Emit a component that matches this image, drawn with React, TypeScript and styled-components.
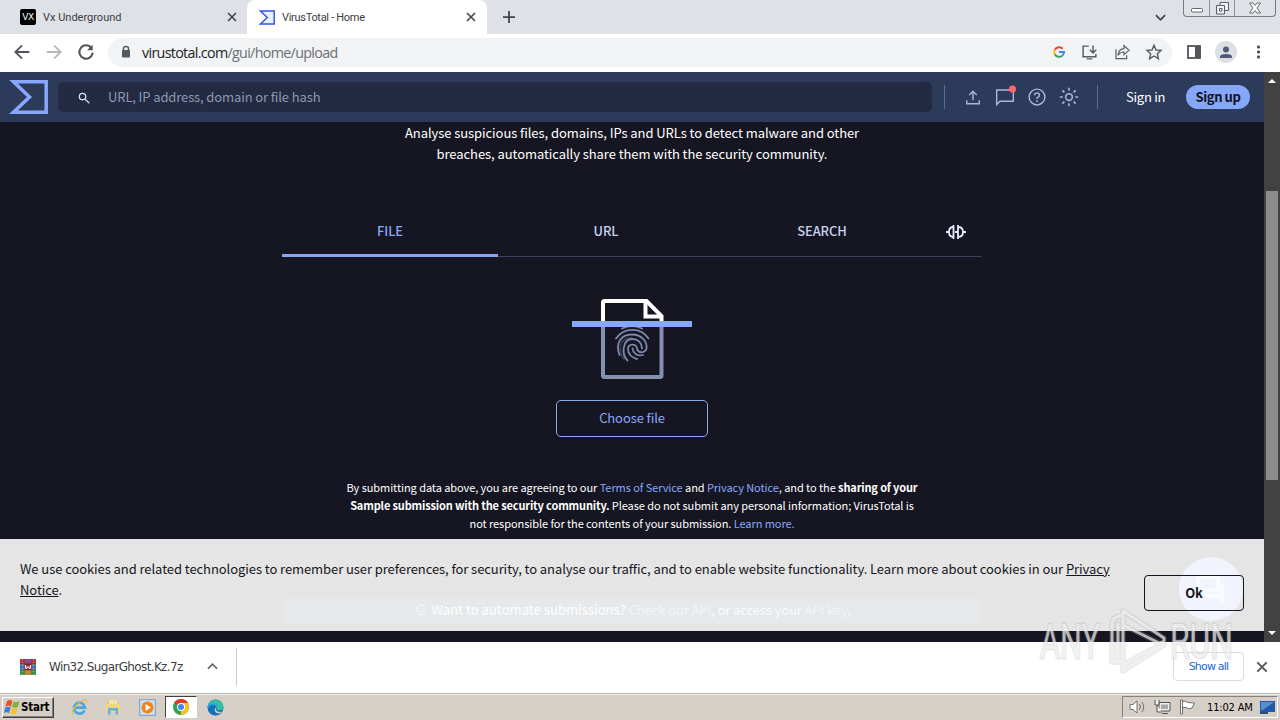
import React, { FC, ReactNode } from 'react'
import styled, { createGlobalStyle } from 'styled-components'

const GlobalStyle = createGlobalStyle`
	* {
		box-sizing: border-box;
	}

	body {
		margin: 0;
		overflow: hidden;
	}

	svg {
		display: block;
		flex: none;
		overflow: visible;
	}
`

const Screen = styled.div`
	position: relative;
	display: flex;
	flex-direction: column;
	width: 1280px;
	height: 720px;
	overflow: hidden;
	background: #fff;
	font-family: 'Noto Sans CJK SC', 'Noto Sans', sans-serif;
`

/* browser chrome */

const TabStrip = styled.div`
	display: flex;
	height: 34px;
	background: #dee1e6;
	font-family: Roboto, 'Noto Sans', sans-serif;
`

const BrowserTab = styled.div<{ $active?: boolean }>`
	display: flex;
	align-items: center;
	gap: 7px;
	width: ${({ $active }) => ($active ? 240 : 247)}px;
	padding: 0 ${({ $active }) => ($active ? 10 : 9)}px 0 ${({ $active }) => ($active ? 12 : 20)}px;
	border-radius: 8px 8px 0 0;
	background: ${({ $active }) => ($active ? '#fff' : 'transparent')};
	color: #3c4043;
	font-size: 11px;
	letter-spacing: ${({ $active }) => ($active ? -0.3 : 0)}px;

	& .title {
		flex: 1;
		white-space: nowrap;
	}
`

const VxLogo = styled.span`
	display: flex;
	align-items: center;
	justify-content: center;
	width: 16px;
	height: 16px;
	border-radius: 2px;
	background: #000;
	color: #fff;
	font: 9px 'DejaVu Sans', sans-serif;
	letter-spacing: -0.4px;
`

const NewTab = styled.div`
	display: flex;
	align-items: center;
	flex: 1;
	padding-left: 16px;
`

const TabSearch = styled.div`
	display: flex;
	align-items: center;
	padding-right: 17px;
`

const WindowButtons = styled.div`
	display: flex;
	width: 93px;
	height: 17px;
	margin-right: 4px;
	border: 1px solid #777b82;
	border-top: 0;
	border-radius: 0 0 4px 4px;
`

const WindowButton = styled.div<{ $width: number }>`
	display: flex;
	align-items: center;
	justify-content: center;
	width: ${({ $width }) => $width}px;

	& + & {
		border-left: 1px solid #8e9299;
	}
`

const Toolbar = styled.div`
	display: flex;
	align-items: center;
	height: 38px;
	padding: 0 10px 2px 14px;
`

const NavButtons = styled.div`
	display: flex;
	gap: 16px;
	padding-right: 14px;
`

const AddressBar = styled.div`
	display: flex;
	align-items: center;
	width: 1064px;
	height: 29px;
	padding: 0 10px 0 11px;
	border-radius: 15px;
	background: #f1f3f4;
	font: 14.3px 'Open Sans', sans-serif;
	letter-spacing: -0.68px;
	color: #6b6f74;

	& .url {
		flex: 1;
		margin-left: 9px;
	}

	& b {
		font-weight: 400;
		color: #202124;
	}
`

const AddressActions = styled.div`
	display: flex;
	align-items: center;
	gap: 16px;
`

const Profile = styled.div`
	display: flex;
	align-items: center;
	gap: 11px;
	padding-left: 15px;

	& .avatar {
		display: flex;
		align-items: center;
		justify-content: center;
		width: 22px;
		height: 22px;
		margin-left: 3px;
		border-radius: 50%;
		background: #dcdfe4;
	}
`

/* page */

const Viewport = styled.div`
	display: flex;
	height: 570px;
	background: #161622;
`

const Page = styled.div`
	position: relative;
	display: flex;
	flex-direction: column;
	align-items: center;
	width: 1264px;
	color: #fff;
`

const Header = styled.header`
	display: flex;
	align-items: center;
	width: 100%;
	height: 50px;
	padding: 0 14px 0 10px;
	background: #2d3b5a;
`

const SearchBox = styled.div`
	display: flex;
	align-items: center;
	gap: 17px;
	width: 874px;
	height: 30px;
	margin: 0 12px 0 10px;
	padding: 0 0 1px 19px;
	border-radius: 5px;
	background: #232a42;
	color: #8e98b2;
	font-size: 13px;
	letter-spacing: -0.12px;

	& svg {
		margin-top: 2px;
	}
`

const Divider = styled.span`
	width: 1px;
	height: 24px;
	background: #5b6a8e;
`

const HeaderIcons = styled.div`
	display: flex;
	align-items: center;
	gap: 12px;
	padding: 0 18px;
`

const SignIn = styled.span`
	width: 88px;
	padding: 0 0 1px 28px;
	font-size: 13px;
	letter-spacing: -0.25px;
	white-space: nowrap;
`

const SignUp = styled.span`
	display: flex;
	align-items: center;
	justify-content: center;
	width: 64px;
	height: 24px;
	padding-bottom: 1px;
	border-radius: 12px;
	background: #86a6fa;
	color: #11131f;
	font-size: 13px;
	font-weight: 700;
	letter-spacing: -0.4px;
`

const Intro = styled.p`
	margin: 0;
	text-align: center;
	font-size: 13px;
	line-height: 21px;
	letter-spacing: -0.07px;
	white-space: nowrap;
`

const Tabs = styled.nav`
	display: flex;
	width: 700px;
	height: 51px;
	margin-top: 42px;
	border-bottom: 1px solid #3d4258;
`

const Tab = styled.div<{ $active?: boolean }>`
	display: flex;
	align-items: center;
	justify-content: center;
	width: 216px;
	height: 51px;
	padding: ${({ $active }) => ($active ? '1px 0 0' : '0 0 2px')};
	border-bottom: ${({ $active }) => ($active ? '3px solid #87a6ef' : '0')};
	color: ${({ $active }) => ($active ? '#88a8ff' : '#c7d2f0')};
	font-size: 12.9px;
	font-weight: 500;
	letter-spacing: -0.1px;
`

const GraphTab = styled(Tab)`
	width: 52px;
	padding-bottom: 0;
`

const FileArt = styled.div`
	margin-top: 42px;
`

const ChooseFile = styled.div`
	display: flex;
	align-items: center;
	justify-content: center;
	width: 152px;
	height: 37px;
	margin-top: 21px;
	padding-bottom: 2px;
	border: 1px solid #8fa9f0;
	border-radius: 5px;
	color: #88a8ff;
	font-size: 13px;
	letter-spacing: -0.1px;
`

const Terms = styled.p`
	margin: 41px 0 0;
	text-align: center;
	font-size: 11px;
	line-height: 18px;
	letter-spacing: -0.07px;
	white-space: nowrap;

	& a {
		color: #88a8ff;
	}

	& b {
		font-weight: 700;
		letter-spacing: -0.15px;
	}
`

const CookieBar = styled.div`
	position: absolute;
	left: 0;
	bottom: 11px;
	width: 100%;
	height: 92px;
	padding: 18px 20px 0;
	border-top: 2px solid #e2e4ec;
	background: #e5e5e5;
	color: #161622;
	font-size: 13px;
	line-height: 21px;
	letter-spacing: -0.07px;

	& p {
		margin: -1px 0 0;
		white-space: nowrap;
	}
`

const AutomateNote = styled.div`
	position: absolute;
	left: 284px;
	bottom: 7px;
	display: flex;
	align-items: center;
	justify-content: center;
	gap: 4px;
	width: 696px;
	height: 26px;
	padding: 0 0 3px 2px;
	background: #e6e9eb;
	color: #fbfbfb;
	font-size: 13px;
	white-space: nowrap;
	letter-spacing: -0.1px;

	& b {
		font-weight: 500;
	}

	& a {
		color: #f1f3f8;
	}
`

const ChatBubble = styled.div`
	position: absolute;
	right: 21px;
	bottom: 10px;
	display: flex;
	align-items: center;
	justify-content: center;
	width: 64px;
	height: 64px;
	border-radius: 50%;
	background: #f1f3fd;
`

const OkButton = styled.div`
	position: absolute;
	right: 20px;
	bottom: 20px;
	display: flex;
	align-items: center;
	justify-content: center;
	width: 100px;
	height: 36px;
	padding-bottom: 2px;
	border: 1px solid #161622;
	border-radius: 4px;
	font-weight: 700;
`

const Scrollbar = styled.div`
	display: flex;
	flex-direction: column;
	align-items: center;
	justify-content: space-between;
	width: 16px;
	padding: 6px 0;
	background: #424242;

	& .thumb {
		width: 12px;
		height: 289px;
		margin-bottom: 44px;
		background: #8c8c8c;
	}
`

/* downloads shelf */

const Downloads = styled.div`
	display: flex;
	align-items: center;
	height: 51px;
	padding: 0 11px 2px 20px;
	background: #fff;
`

const DownloadItem = styled.div`
	display: flex;
	align-items: center;
	gap: 13px;
	width: 217px;
	height: 38px;
	border-right: 1px solid #c8cacd;
	color: #3c4043;
	font: 12px 'DejaVu Sans', sans-serif;
	letter-spacing: -0.64px;

	& .name {
		width: 145px;
		white-space: nowrap;
	}
`

const ShowAll = styled.div`
	display: flex;
	align-items: center;
	justify-content: center;
	width: 71px;
	height: 29px;
	margin: 0 11px 0 auto;
	border: 1px solid #dadce0;
	border-radius: 4px;
	color: #1a67d2;
	font: 11px 'DejaVu Sans', sans-serif;
	letter-spacing: -0.8px;
`

/* windows taskbar */

const Taskbar = styled.div`
	display: flex;
	align-items: center;
	height: 27px;
	padding: 0 2px;
	border-top: 1px solid #b8b5ae;
	background: #d5cfc7;
	box-shadow: inset 0 1px #f1efeb;
`

const StartButton = styled.div`
	display: flex;
	align-items: center;
	gap: 1px;
	width: 52px;
	height: 21px;
	padding-left: 1px;
	border: 1px solid;
	border-color: #fff #404040 #404040 #fff;
	box-shadow: inset -1px -1px #85827c;
	font: 700 11.5px 'DejaVu Sans Condensed', sans-serif;
	letter-spacing: -0.25px;
	color: #000;
`

const QuickLaunch = styled.div`
	display: flex;
	align-items: center;
	gap: 2px;
	margin-left: 9px;
`

const LaunchItem = styled.div<{ $pressed?: boolean }>`
	display: flex;
	align-items: center;
	justify-content: center;
	width: 32px;
	height: 22px;
	border: 1px solid;
	border-color: ${({ $pressed }) => ($pressed ? '#404040 #fff #fff #404040' : 'transparent')};
	background: ${({ $pressed }) => ($pressed ? '#fff' : 'transparent')};
`

const Tray = styled.div`
	display: flex;
	align-items: center;
	gap: 8px;
	width: 156px;
	height: 22px;
	margin-left: auto;
	padding-left: 6px;
	border: 1px solid;
	border-color: #85827c #fff #fff #85827c;
	font: 11px 'DejaVu Sans Condensed', sans-serif;
	letter-spacing: -0.15px;
	color: #000;
	white-space: nowrap;

	& .clock {
		margin: 0 -1px 0 3px;
	}
`

const Watermark = styled.div`
	position: absolute;
	left: 1034px;
	top: 604px;
`

interface IconProps {
	size: number
	color: string
	width?: number
	children: ReactNode
}

const Icon: FC<IconProps> = ({ size, color, width = 2, children }) => (
	<svg width={size} height={size} viewBox='0 0 24 24' fill='none' stroke={color} strokeWidth={width}>
		{children}
	</svg>
)

const CloseIcon: FC<{ size: number; color?: string }> = ({ size, color = '#45494d' }) => (
	<Icon size={size} color={color} width={3.4}>
		<path d='M4 4l16 16M20 4L4 20' />
	</Icon>
)

const Sigma: FC<{ width: number; height: number; color: string; fill?: string }> = ({
	width,
	height,
	color,
	fill = 'none',
}) => (
	<svg width={width} height={height} viewBox='0 0 38 34'>
		<path d='M3.5 1.8H36.2V32.2H3.5L19.5 17Z' fill={fill} stroke={color} strokeWidth='3.5' />
	</svg>
)

const FingerprintFile = () => (
	<svg width='120' height='80' viewBox='0 0 120 80' fill='none'>
		<path d='M31 25V76.5Q31 78 32.5 78H88Q89.5 78 89.5 76.5V25' stroke='#8490ac' strokeWidth='4' />
		<path d='M31 25V3.5Q31 2 32.5 2H74.5L89.5 17V25' stroke='#fff' strokeWidth='4' />
		<path d='M73.5 2V17.5H89.5' stroke='#fff' strokeWidth='4' />
		<g stroke='#7b88ab' strokeWidth='1.8' strokeLinecap='round'>
			<path d='M50 29.5Q60 24.5 70 29.5' />
			<path d='M44 39.5C52 28 69 28 76.5 39.5' />
			<path d='M47.500 56C43 44 49 35.500 60 35.500C70 35.500 75.500 43 74.500 49.500C73 54.500 66 54.500 65 49.500C64 44 56 44.500 56 50C56 55 60 59 65 60' />
			<path d='M55.500 61.500C49 55 50.500 40 60.500 40C66 40 70 44 70 49.500' />
			<path d='M52 60C45.500 51 47 39 59.500 39' strokeOpacity='.35' />
			<path d='M60.500 49.500C61 54 65 57.500 71 56' />
		</g>
		<rect x='0' y='22' width='120' height='6' fill='#88a8ff' />
	</svg>
)

const GraphIcon = () => (
	<svg width='20' height='16' viewBox='0 0 20 16' fill='none' stroke='#e6ebfa' strokeWidth='1.8'>
		<path d='M0 8H3M7.500 1V15M7.500 3Q3 3 3 8T7.500 13M12 1V15M12 3Q17 3 17 8T12 13M17 8H20M9 8H12' />
	</svg>
)

const GoogleLogo = () => (
	<svg width='12' height='12' viewBox='0 0 24 24' fill='none' strokeWidth='4'>
		<path d='M19.5 5.5A10 10 0 0 0 3.5 7.5' stroke='#ea4335' />
		<path d='M3.5 7.5A10 10 0 0 0 3.5 16.5' stroke='#fbbc05' />
		<path d='M3.5 16.5A10 10 0 0 0 18.5 19.5' stroke='#34a853' />
		<path d='M18.5 19.5Q22 16.5 22 12H12' stroke='#4285f4' />
	</svg>
)

const ArchiveIcon = () => (
	<svg width='16' height='16' viewBox='0 0 16 16'>
		<path d='M0 0H16V5H0Z' fill='#b8303c' />
		<path d='M5 0H11V5H5Z' fill='#8a4a9c' />
		<path d='M0 5.500H16V10.500H0Z' fill='#3b74bd' />
		<path d='M0 11H16V16H0Z' fill='#2f9550' />
		<path d='M5 11H11V16H5Z' fill='#d0802f' />
		<path d='M4.500 4.500H11.500V11H4.500Z' fill='#a7263a' />
		<path d='M5.500 6V9.500H7V7.500L8 8.500L9 7.500V9.500H10.500V6' fill='none' stroke='#f6e7dd' />
		<path d='M2.500 0V16M13.500 0V16' stroke='#d5ae51' strokeDasharray='1 2' />
		<path d='M0 5.200H16M0 10.800H16' stroke='#372a2f' strokeWidth='.7' />
	</svg>
)

const WindowsFlag = () => (
	<svg width='16' height='16' viewBox='0 0 16 16'>
		<path d='M3 2Q6 0 8.5 2L7 7.5Q4.5 6 1.5 7.5Z' fill='#e5542c' />
		<path d='M9.5 2.5Q12 4 15.5 2L14 8Q11 9.5 8 8Z' fill='#79b43c' />
		<path d='M1.2 8.5Q4 7 6.7 8.5L5 14Q2.5 12.5 0 14Z' fill='#3d7fd0' />
		<path d='M7.7 9Q10.5 10.5 13.7 9L12 14.5Q9.5 16 6.2 14.5Z' fill='#f5c327' />
	</svg>
)

const ExplorerIcon = () => (
	<svg width='17' height='17' viewBox='0 0 17 17' fill='none'>
		<path d='M13.5 11.5A5.5 5.5 0 1 1 14 8.7H4.5' stroke='#43a9e3' strokeWidth='2.7' />
		<path d='M2 15.5C-1 13 6 4 12 1.5C15 .5 16.5 1.5 15.5 4' stroke='#e8bb3f' strokeWidth='1.3' />
	</svg>
)

const FolderIcon = () => (
	<svg width='16' height='16' viewBox='0 0 16 16'>
		<path d='M2 2H7L8 4H14V13H2Z' fill='#e5c66f' />
		<path d='M4 1H12V5H4Z' fill='#f0e3ac' />
		<path d='M1 5H15V13H1Z' fill='#f0d47e' />
		<path d='M3 15.5V9H13V15.5H10.5V11.5H5.5V15.5Z' fill='#6aafdc' />
	</svg>
)

const MediaIcon = () => (
	<svg width='17' height='17' viewBox='0 0 17 17'>
		<rect x='.7' y='.7' width='15.6' height='15.6' fill='#cfe1f1' stroke='#739dca' />
		<circle cx='8.5' cy='8.5' r='6' fill='#f18319' />
		<path d='M6.5 5L12 8.5L6.5 12Z' fill='#fff' />
	</svg>
)

const ChromeIcon = () => (
	<svg width='16' height='16' viewBox='0 0 16 16'>
		<circle cx='8' cy='8' r='8' fill='#31a350' />
		<path d='M8 8L1.1 4A8 8 0 0 1 14.9 4Z' fill='#e33b2e' />
		<path d='M8 8V4H14.9A8 8 0 0 1 8 16Z' fill='#fbc116' />
		<circle cx='8' cy='8' r='4' fill='#fff' />
		<circle cx='8' cy='8' r='3' fill='#4285f4' />
	</svg>
)

const EdgeIcon = () => (
	<svg width='17' height='17' viewBox='0 0 17 17'>
		<circle cx='8.5' cy='8.5' r='8' fill='#1271b8' />
		<path d='M.7 7A8 8 0 0 1 16.5 8C16.5 12 11 12 9.5 10C11 6 7 4 .7 7Z' fill='#36bf9f' />
		<path d='M.7 7C5 2 12 4 10 9C8 5 3 5 .7 10Z' fill='#2ca2da' />
		<path d='M9.5 8.5C7 11 11 14 15.5 12.5C14.5 14 12 15 10 14C7 13 7 9 9.5 8.5Z' fill='#d5cfc7' />
	</svg>
)

const logoPath =
	'M88 58H78V21Q78 13 86 12M84 57V20M89 61V7L130 34Q131 39 125 39L89 21M122 43L89 61V67L130 41'

const AnyRunMark = () => (
	<svg width='206' height='74' viewBox='0 0 206 74' fill='none'>
		<g
			fontFamily='Roboto, sans-serif'
			fontSize='49'
			fontWeight='400'
			stroke='#999'
			strokeOpacity='.22'
			strokeWidth='3'
			paintOrder='stroke'
			fill='#f2f2f2'
			fillOpacity='.72'>
			<text x='6' y='54' textLength='60' lengthAdjust='spacingAndGlyphs'>
				ANY
			</text>
			<text x='136' y='54' textLength='63' lengthAdjust='spacingAndGlyphs'>
				RUN
			</text>
		</g>
		<g strokeLinejoin='round' strokeLinecap='round'>
			<path d={logoPath} stroke='#999' strokeOpacity='.22' strokeWidth='5.5' />
			<path d={logoPath} stroke='#f2f2f2' strokeOpacity='.7' strokeWidth='3' />
		</g>
	</svg>
)

const App = () => (
	<Screen>
		<GlobalStyle />
		<TabStrip>
			<BrowserTab>
				<VxLogo>VX</VxLogo>
				<span className='title'>Vx Underground</span>
				<CloseIcon size={12} />
			</BrowserTab>
			<BrowserTab $active>
				<Sigma width={16} height={15} color='#3157ed' fill='#e9efff' />
				<span className='title'>VirusTotal - Home</span>
				<CloseIcon size={12} />
			</BrowserTab>
			<NewTab>
				<Icon size={12} color='#404448' width={3.5}>
					<path d='M12 0v24M0 12h24' />
				</Icon>
			</NewTab>
			<TabSearch>
				<Icon size={11} color='#404448' width={4}>
					<path d='M2 7l10 10L22 7' />
				</Icon>
			</TabSearch>
			<WindowButtons>
				<WindowButton $width={25}>
					<svg width='12' height='16'>
						<rect x='.5' y='8.5' width='11' height='3.5' rx='1' fill='#fff' stroke='#62666c' />
					</svg>
				</WindowButton>
				<WindowButton $width={25}>
					<svg width='13' height='16' fill='#edf0f4' stroke='#5b6066'>
						<path d='M4 2.5H12.5V10.5H4Z' />
						<path d='M.5 5.5H8.5V14H.5Z' />
						<path d='M3.5 8.5H6V11H3.5Z' />
					</svg>
				</WindowButton>
				<WindowButton $width={41}>
					<svg width='12' height='16' viewBox='0 0 12 16'>
						<path
							d='M.5 3H4L6 5.5L8 3H11.5L8 8L11.5 13H8L6 10.5L4 13H.5L4 8Z'
							fill='#fff'
							stroke='#666a70'
						/>
					</svg>
				</WindowButton>
			</WindowButtons>
		</TabStrip>

		<Toolbar>
			<NavButtons>
				<Icon size={16} color='#515559' width={2.7}>
					<path d='M23 12H3M12 2L2 12L12 22' />
				</Icon>
				<Icon size={16} color='#b5b8bb' width={2.7}>
					<path d='M1 12H21M12 2L22 12L12 22' />
				</Icon>
				<Icon size={16} color='#515559' width={3}>
					<path d='M20 6A10 10 0 1 0 22 13' />
					<path d='M22 1V9.5H13.5Z' fill='#515559' stroke='none' />
				</Icon>
			</NavButtons>
			<AddressBar>
				<svg width='14' height='14' viewBox='0 0 14 14'>
					<path d='M4.5 6V3.5Q4.5 1.5 7 1.5T9.5 3.5V6' fill='none' stroke='#55595d' strokeWidth='1.5' />
					<rect x='3' y='5' width='8' height='7.5' rx='1' fill='#55595d' />
				</svg>
				<span className='url'>
					<b>virustotal.com</b>/gui/home/upload
				</span>
				<AddressActions>
					<GoogleLogo />
					<Icon size={17} color='#5a5e63' width={2.1}>
						<path d='M11 3H3V18H21V14M8 21H16M17 2V12M12.5 8L17 12.5L21.5 8' />
					</Icon>
					<Icon size={16} color='#5a5e63' width={1.8}>
						<path d='M3 8V22H19V17M6 17C7 10 11 7 15 7V2.5L22.5 9.5L15 16V12C11 12 8 14 6 17Z' />
					</Icon>
					<Icon size={16} color='#5a5e63' width={2.2}>
						<path d='M12 2L15 9L22.5 9.5L17 14.5L18.5 22L12 18L5.5 22L7 14.5L1.5 9.5L9 9Z' />
					</Icon>
				</AddressActions>
			</AddressBar>
			<Profile>
				<svg width='14' height='14'>
					<rect x='1' y='1' width='12' height='12' fill='none' stroke='#515559' strokeWidth='1.8' />
					<rect x='8' y='1' width='5.5' height='12' fill='#515559' />
				</svg>
				<span className='avatar'>
					<svg width='12' height='13' viewBox='0 0 12 13' fill='#525a74'>
						<circle cx='6' cy='3.5' r='3' />
						<path d='M0 12V10.5Q0 8 6 8T12 10.5V12Z' />
					</svg>
				</span>
				<svg width='20' height='16' fill='#515559'>
					<rect x='9' y='1.5' width='3' height='3' rx='1' />
					<rect x='9' y='6.5' width='3' height='3' rx='1' />
					<rect x='9' y='11.5' width='3' height='3' rx='1' />
				</svg>
			</Profile>
		</Toolbar>

		<Viewport>
			<Page>
				<Header>
					<Sigma width={38} height={34} color='#88a8ff' />
					<SearchBox>
						<Icon size={14} color='#dce2f0' width={2.2}>
							<circle cx='9.5' cy='9.5' r='5.5' />
							<path d='M13.5 13.5L21 21' />
						</Icon>
						URL, IP address, domain or file hash
					</SearchBox>
					<Divider />
					<HeaderIcons>
						<Icon size={20} color='#a9b7dc' width={1.7}>
							<path d='M12 16V5M7.5 9.5L12 5L16.5 9.5M4.5 16V20H19.5V16' />
						</Icon>
						<Icon size={20} color='#a9b7dc' width={1.7}>
							<path d='M2 21V3.5H22V17H6Z' />
							<circle cx='21' cy='2.5' r='4.3' fill='#ff6470' stroke='none' />
						</Icon>
						<Icon size={20} color='#a9b7dc' width={1.7}>
							<circle cx='12' cy='12' r='9.5' />
							<path d='M9 10Q9 7 12 7T15 10Q15 11.5 12 13V14.5M12 16V18' />
						</Icon>
						<Icon size={20} color='#a9b7dc' width={1.9}>
							<circle cx='12' cy='12' r='4' />
							<path d='M12 1V4.5M12 19.5V23M1 12H4.5M19.5 12H23M4 4L6.5 6.5M17.5 17.5L20 20M20 4L17.5 6.5M6.5 17.5L4 20' />
						</Icon>
					</HeaderIcons>
					<Divider />
					<SignIn>Sign in</SignIn>
					<SignUp>Sign up</SignUp>
				</Header>

				<Intro>
					Analyse suspicious files, domains, IPs and URLs to detect malware and other
					<br />
					breaches, automatically share them with the security community.
				</Intro>

				<Tabs>
					<Tab $active>FILE</Tab>
					<Tab>URL</Tab>
					<Tab>SEARCH</Tab>
					<GraphTab>
						<GraphIcon />
					</GraphTab>
				</Tabs>

				<FileArt>
					<FingerprintFile />
				</FileArt>
				<ChooseFile>Choose file</ChooseFile>

				<Terms>
					By submitting data above, you are agreeing to our <a>Terms of Service</a> and <a>Privacy Notice</a>, and
					to the <b>sharing of your</b>
					<br />
					<b>Sample submission with the security community.</b> Please do not submit any personal information;
					VirusTotal is
					<br />
					not responsible for the contents of your submission. <a>Learn more.</a>
				</Terms>

				<CookieBar>
					<AutomateNote>
						<Icon size={12} color='#f8f8f8'>
							<circle cx='12' cy='12' r='10' />
							<path d='M8 13Q12 19 16 13M8 8V10M16 8V10' />
						</Icon>
						<span>
							<b>Want to automate submissions?</b> <a>Check our API</a>, or access your <a>API key</a>.
						</span>
					</AutomateNote>
					<ChatBubble>
						<Icon size={34} color='#fafbff' width={3}>
							<path d='M3 3H17V13H6L3 16ZM20 8V20L17 17H8' />
						</Icon>
					</ChatBubble>
					<p>
						We use cookies and related technologies to remember user preferences, for security, to analyse our
						traffic, and to enable website functionality. Learn more about cookies in our <u>Privacy</u>
						<br />
						<u>Notice</u>.
					</p>
					<OkButton>Ok</OkButton>
				</CookieBar>
			</Page>
			<Scrollbar>
				<svg width='8' height='6'>
					<path d='M0 5L4 1L8 5Z' fill='#fff' />
				</svg>
				<div className='thumb' />
				<svg width='8' height='6'>
					<path d='M0 1L4 5L8 1Z' fill='#fff' />
				</svg>
			</Scrollbar>
		</Viewport>

		<Downloads>
			<DownloadItem>
				<ArchiveIcon />
				<span className='name'>Win32.SugarGhost.Kz.7z</span>
				<Icon size={11} color='#5a5e62' width={3.5}>
					<path d='M2 17L12 7L22 17' />
				</Icon>
			</DownloadItem>
			<ShowAll>Show all</ShowAll>
			<CloseIcon size={14} color='#55595d' />
		</Downloads>

		<Taskbar>
			<StartButton>
				<WindowsFlag />
				Start
			</StartButton>
			<QuickLaunch>
				<LaunchItem>
					<ExplorerIcon />
				</LaunchItem>
				<LaunchItem>
					<FolderIcon />
				</LaunchItem>
				<LaunchItem>
					<MediaIcon />
				</LaunchItem>
				<LaunchItem $pressed>
					<ChromeIcon />
				</LaunchItem>
				<LaunchItem>
					<EdgeIcon />
				</LaunchItem>
			</QuickLaunch>
			<Tray>
				<svg width='17' height='16' viewBox='0 0 17 16' fill='#fff' stroke='#707070'>
					<path d='M1 5.5H4L8 2V14L4 10.5H1Z' />
					<path d='M10.5 5Q12.5 8 10.5 11M13 3Q16.5 8 13 13' fill='none' />
				</svg>
				<svg width='17' height='16' viewBox='0 0 17 16' fill='#eee' stroke='#555'>
					<path d='M5 3.5H16V12H5ZM8 14.5H14' />
					<path d='M7 5.5H14V10H7Z' fill='#aaa' stroke='none' />
					<path d='M1 1V6H5V1M3 6V13H8' />
				</svg>
				<svg width='17' height='16' viewBox='0 0 17 16' fill='#fff' stroke='#6d6d6d'>
					<path d='M1.5 1H3.5V15H1.5ZM3.5 2.5Q6 1 9 3.5L15.5 4L13 9Q10 11 7 8.5H3.5Z' />
				</svg>
				<span className='clock'>11:02 AM</span>
				<svg width='15' height='13' viewBox='0 0 15 13'>
					<rect width='15' height='11' fill='#2058aa' />
					<path d='M1 1H14L3 9H1Z' fill='#578fd0' />
					<path d='M0 11H8V13H0Z' fill='#344c70' />
				</svg>
			</Tray>
		</Taskbar>

		<Watermark>
			<AnyRunMark />
		</Watermark>
	</Screen>
)

export default App
